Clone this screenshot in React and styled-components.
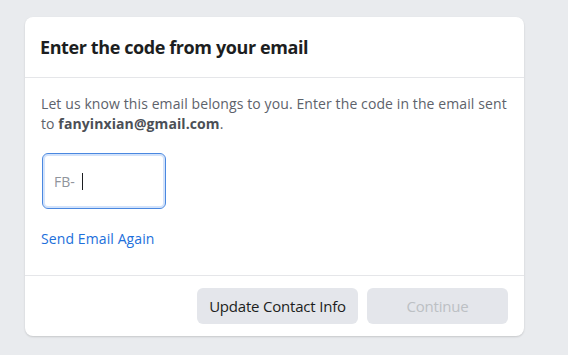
import React from "react";
import styled, { createGlobalStyle } from "styled-components";

const Global = createGlobalStyle`
  html, body { margin: 0; padding: 0; background: #e9ebee; }
  body { font-family: "Open Sans", "Noto Sans", sans-serif; }
`;

const Page = styled.div`
  padding: 17px 0 0 25px;
  height: 355px;
  box-sizing: border-box;
`;

const Card = styled.div`
  width: 499px;
  height: 319px;
  background: #fff;
  border-radius: 8px;
  box-shadow: 0 1px 2px rgba(0, 0, 0, 0.15);
  display: flex;
  flex-direction: column;
  box-sizing: border-box;
`;

const Header = styled.div`
  height: 60px;
  display: flex;
  align-items: center;
  padding: 0 16px;
  border-bottom: 1px solid #e5e6e9;
`;

const Title = styled.h2`
  margin: 0 0 0 -1px;
  font-size: 18px;
  font-weight: 700;
  color: #1c1e21;
  letter-spacing: -0.4px;
`;

const Body = styled.div`
  flex: 1;
  padding: 16px 16px 0;
  border-bottom: 1px solid #e5e6e9;
`;

const Text = styled.div`
  font-size: 14px;
  line-height: 20px;
  color: #5d626b;
  letter-spacing: 0.1px;
`;

const Line = styled.div`
  white-space: nowrap;
`;

const Email = styled.strong`
  color: #4b4f56;
  font-weight: 700;
`;

const InputBox = styled.div`
  margin: 19px 0 0 1px;
  width: 124px;
  height: 56px;
  border: 1px solid #4a88e0;
  border-radius: 6px;
  box-shadow: inset 0 0 0 2px #d3e3fb;
  display: flex;
  align-items: center;
  padding-left: 11px;
  box-sizing: border-box;
  font-size: 14px;
  color: #90949c;
`;

const Caret = styled.span`
  display: inline-block;
  width: 1px;
  height: 17px;
  background: #1c1e21;
  margin-left: 7px;
`;

const Link = styled.a`
  display: block;
  margin-top: 20px;
  font-size: 14px;
  color: #216fdb;
  text-decoration: none;
  letter-spacing: 0.1px;
`;

const Footer = styled.div`
  height: 60px;
  display: flex;
  align-items: center;
  justify-content: flex-end;
  gap: 9px;
  padding: 0 16px;
`;

const Button = styled.button`
  height: 36px;
  width: ${(p) => p.$w}px;
  border: none;
  border-radius: 6px;
  background: #e4e6eb;
  font-family: inherit;
  font-size: 15px;
  font-weight: 500;
  color: ${(p) => (p.$disabled ? "#bcc0c4" : "#1c1e21")};
  letter-spacing: -0.2px;
  padding: 0;
`;

export default function App() {
  return (
    <>
      <Global />
      <Page>
        <Card>
          <Header>
            <Title>Enter the code from your email</Title>
          </Header>
          <Body>
            <Text>
              <Line>Let us know this email belongs to you. Enter the code in the email sent</Line>
              <Line>
                to <Email>fanyinxian@gmail.com</Email>.
              </Line>
            </Text>
            <InputBox>
              FB-<Caret />
            </InputBox>
            <Link href="#">Send Email Again</Link>
          </Body>
          <Footer>
            <Button $w={161}>Update Contact Info</Button>
            <Button $w={141} $disabled>Continue</Button>
          </Footer>
        </Card>
      </Page>
    </>
  );
}
